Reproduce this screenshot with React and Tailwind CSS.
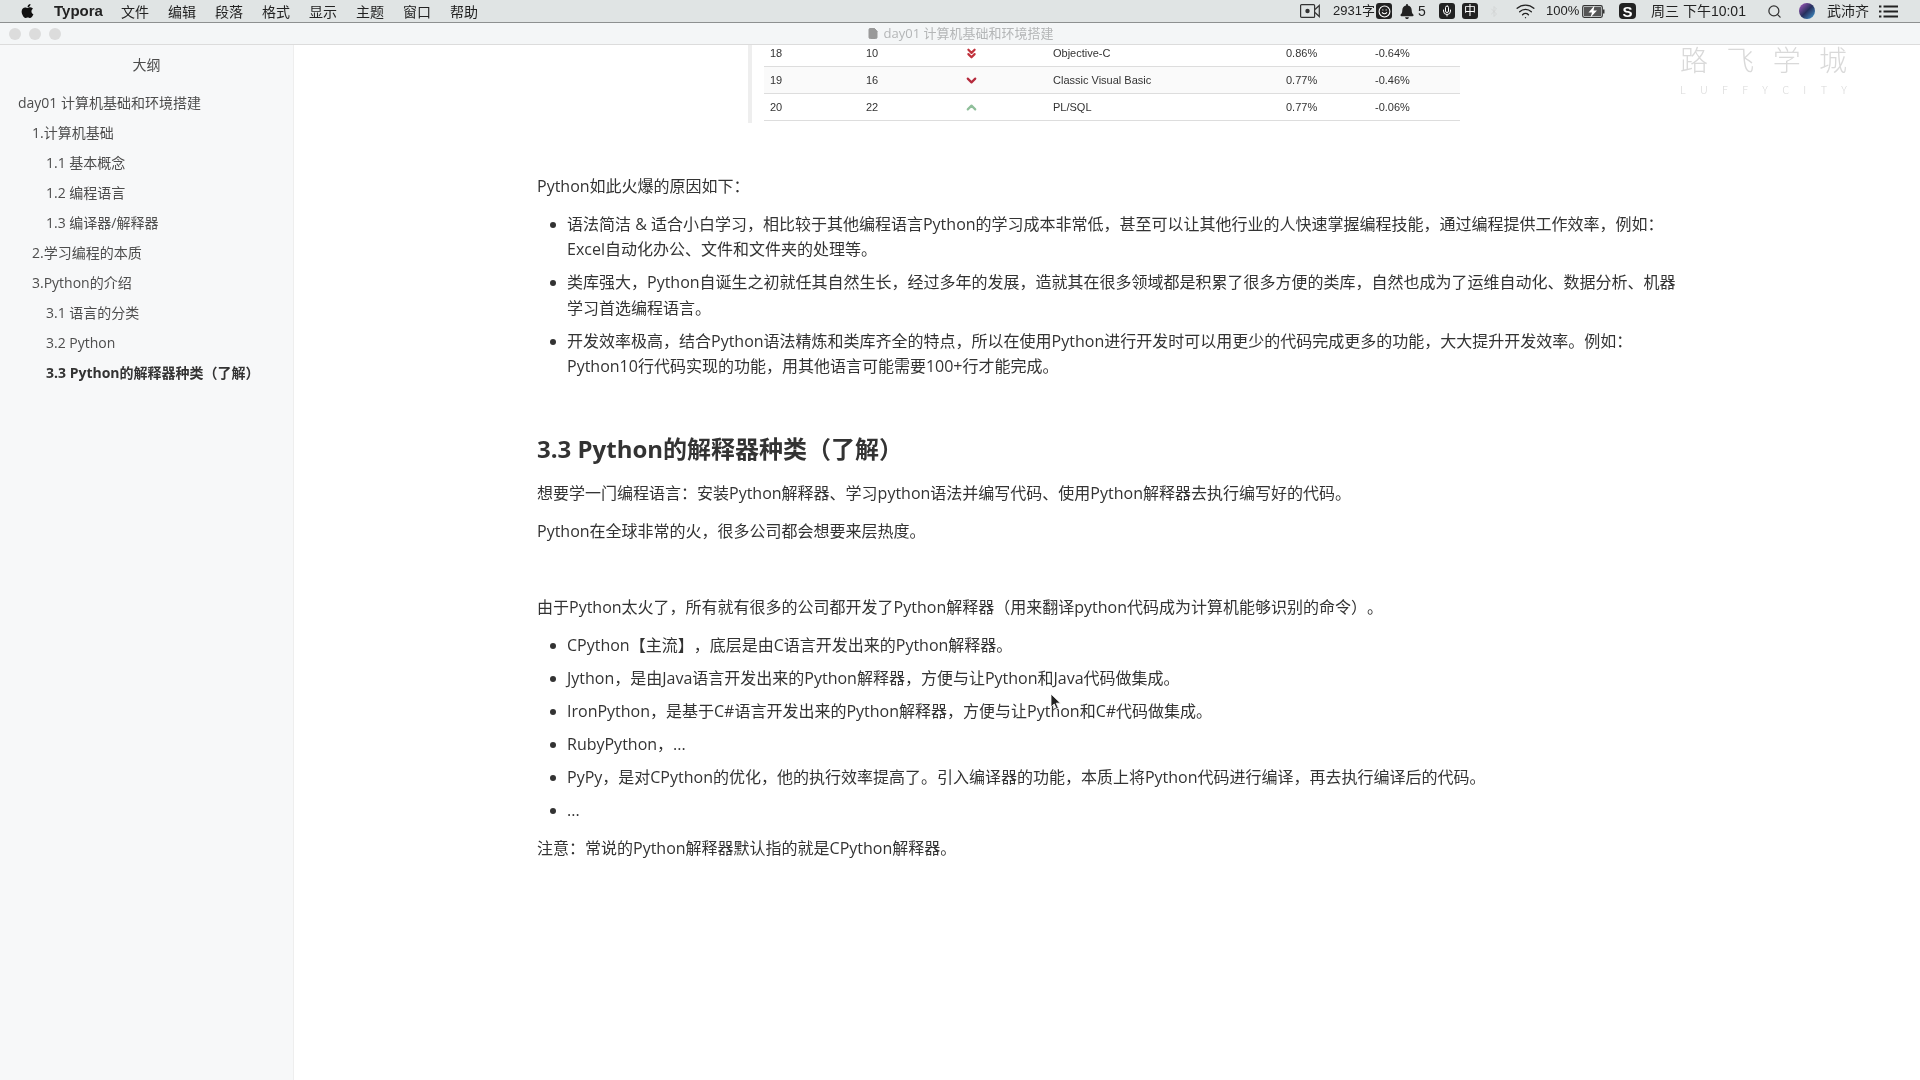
import React from "react";
import { FaApple, FaBell } from "react-icons/fa";
import { Mic, Bluetooth, Wifi, Search, ChevronsDown, ChevronDown, ChevronUp, Smile, File } from "lucide-react";

const FONT = "[font-family:'Open_Sans','Noto_Sans_CJK_SC',sans-serif] [text-spacing-trim:space-all]";

const MENUS = ["文件", "编辑", "段落", "格式", "显示", "主题", "窗口", "帮助"];

const OUTLINE = [
  { label: "day01 计算机基础和环境搭建", level: "pl-[18px]" },
  { label: "1.计算机基础", level: "pl-[32px]" },
  { label: "1.1 基本概念", level: "pl-[46px]" },
  { label: "1.2 编程语言", level: "pl-[46px]" },
  { label: "1.3 编译器/解释器", level: "pl-[46px]" },
  { label: "2.学习编程的本质", level: "pl-[32px]" },
  { label: "3.Python的介绍", level: "pl-[32px]" },
  { label: "3.1 语言的分类", level: "pl-[46px]" },
  { label: "3.2 Python", level: "pl-[46px]" },
  { label: "3.3 Python的解释器种类（了解）", level: "pl-[46px]", active: true },
];

const ROWS = [
  { now: "18", prev: "10", icon: ChevronsDown, color: "w-[15px] h-[15px] text-[#c0323c]", name: "Objective-C", rate: "0.86%", change: "-0.64%" },
  { now: "19", prev: "16", icon: ChevronDown, color: "w-[15px] h-[15px] text-[#b52a3c]", name: "Classic Visual Basic", rate: "0.77%", change: "-0.46%", shade: true },
  { now: "20", prev: "22", icon: ChevronUp, color: "w-[15px] h-[15px] text-[#8fbf9a]", name: "PL/SQL", rate: "0.77%", change: "-0.06%" },
];

const REASONS = [
  ["语法简洁 & 适合小白学习，相比较于其他编程语言Python的学习成本非常低，甚至可以让其他行业的人快速掌握编程技能，通过编程提供工作效率，例如：", "Excel自动化办公、文件和文件夹的处理等。"],
  ["类库强大，Python自诞生之初就任其自然生长，经过多年的发展，造就其在很多领域都是积累了很多方便的类库，自然也成为了运维自动化、数据分析、机器", "学习首选编程语言。"],
  ["开发效率极高，结合Python语法精炼和类库齐全的特点，所以在使用Python进行开发时可以用更少的代码完成更多的功能，大大提升开发效率。例如：", "Python10行代码实现的功能，用其他语言可能需要100+行才能完成。"],
];

const KINDS = [
  "CPython【主流】，底层是由C语言开发出来的Python解释器。",
  "Jython，是由Java语言开发出来的Python解释器，方便与让Python和Java代码做集成。",
  "IronPython，是基于C#语言开发出来的Python解释器，方便与让Python和C#代码做集成。",
  "RubyPython，...",
  "PyPy，是对CPython的优化，他的执行效率提高了。引入编译器的功能，本质上将Python代码进行编译，再去执行编译后的代码。",
  "...",
];

function Bullet({ children }) {
  return (
    <li className="relative pl-[30px] mb-[7.4px] last:mb-0">
      <span className="absolute left-[13px] top-[10px] w-[6px] h-[6px] rounded-full bg-[#333]" />
      {children}
    </li>
  );
}

function CameraIcon() {
  return (
    <svg className="w-[20px] h-[14px]" viewBox="0 0 20 14" fill="none" stroke="#333" strokeWidth="1.2">
      <rect x="0.6" y="0.6" width="14" height="12.800" rx="1" />
      <circle cx="7.500" cy="7" r="2.200" fill="#333" stroke="none" />
      <path d="M15 5.500 19.300 1.500V12.500L15 8.500" />
    </svg>
  );
}

function BatteryIcon() {
  return (
    <svg className="w-[23px] h-[13px]" viewBox="0 0 23 13" fill="none">
      <rect x="0.7" y="0.7" width="19.600" height="11.600" rx="1.500" stroke="#333" strokeWidth="1.2" />
      <rect x="2" y="2" width="17" height="9" fill="#555" />
      <path d="M12.500 0.500 6.500 7.500H10L8.500 12.500 15 5.500H11.500z" fill="#fff" />
      <rect x="21" y="4.500" width="1.500" height="4" fill="#333" />
    </svg>
  );
}

function ListIcon() {
  return (
    <svg className="w-[19px] h-[13px]" viewBox="0 0 19 13" fill="#222">
      <rect x="0" y="0.500" width="2.400" height="2" />
      <rect x="4.500" y="0.500" width="14.500" height="2" />
      <rect x="0" y="5.500" width="2.400" height="2" />
      <rect x="4.500" y="5.500" width="14.500" height="2" />
      <rect x="0" y="10.500" width="2.400" height="2" />
      <rect x="4.500" y="10.500" width="14.500" height="2" />
    </svg>
  );
}

function MenuBar() {
  return (
    <header className={`${FONT} h-[23px] shrink-0 flex items-center bg-[#e0e4e4] border-b border-[#8d9090] text-[14px] text-[#222]`}>
      <FaApple className="ml-[20px] w-[15px] h-[16px] text-[#111]" />
      <span className="ml-[19px] w-[49px] text-[15px] font-bold [font-family:'Liberation_Sans',sans-serif]">Typora</span>
      <div className="ml-[18px] flex gap-[19px]">
        {MENUS.map((m) => <span key={m} className="w-[28px] whitespace-nowrap">{m}</span>)}
      </div>
      <div className="ml-auto flex items-center text-[13px] [font-family:'Liberation_Sans','Noto_Sans_CJK_SC',sans-serif]">
        <CameraIcon />
        <span className="ml-[13px] w-[39px] whitespace-nowrap">2931字</span>
        <span className="ml-[4px] w-[16px] h-[16px] rounded-[3px] bg-[#222] flex items-center justify-center">
          <Smile className="w-[13px] h-[13px] text-white" />
        </span>
        <FaBell className="ml-[8px] w-[14px] h-[15px] text-[#222]" />
        <span className="ml-[4px] w-[8px] text-[14px]">5</span>
        <span className="ml-[13px] w-[16px] h-[16px] rounded-[3px] bg-[#222] flex items-center justify-center">
          <Mic className="w-[12px] h-[12px] text-white" />
        </span>
        <span className="ml-[7px] w-[16px] h-[16px] rounded-[3px] bg-[#222] text-white text-[12px] leading-none flex items-center justify-center">中</span>
        <Bluetooth className="ml-[10px] w-[12px] h-[15px] text-[#cfd2d2]" strokeWidth={1.5} />
        <Wifi className="ml-[14px] w-[23px] h-[20px] text-[#222]" strokeWidth={1.6} />
        <span className="ml-[9px] w-[31px] text-[13px] whitespace-nowrap">100%</span>
        <span className="ml-[5px] flex"><BatteryIcon /></span>
        <span className="ml-[14px] w-[17px] h-[16px] rounded-[4px] bg-[#222] text-white text-[15px] font-bold leading-none flex items-center justify-center">S</span>
        <span className="ml-[15px] w-[96px] text-[14px] whitespace-nowrap">周三 下午10:01</span>
        <Search className="ml-[20px] w-[15px] h-[15px] text-[#333]" />
        <span className="ml-[17px] w-[16px] h-[16px] rounded-full bg-gradient-to-br from-[#b05ac8] via-[#27305e] to-[#3aa0d8]" />
        <span className="ml-[12px] w-[42px] text-[14px] whitespace-nowrap">武沛齐</span>
        <span className="ml-[10px] mr-[22px] flex"><ListIcon /></span>
      </div>
    </header>
  );
}

function TitleBar() {
  return (
    <div className={`${FONT} relative h-[22px] shrink-0 flex items-center justify-center bg-[#f4f6f7] border-b border-[#dcdcdc] text-[13px] text-[#b4b6b7]`}>
      <div className="absolute left-[9px] top-[5px] flex gap-[8px]">
        <span className="w-[12px] h-[12px] rounded-full bg-[#dcdcdc]" />
        <span className="w-[12px] h-[12px] rounded-full bg-[#dcdcdc]" />
        <span className="w-[12px] h-[12px] rounded-full bg-[#dcdcdc]" />
      </div>
      <File className="w-[12px] h-[13px] mr-[5px] text-[#999] fill-[#999]" />
      day01 计算机基础和环境搭建
    </div>
  );
}

function Sidebar() {
  return (
    <aside className={`${FONT} w-[294px] shrink-0 bg-[#f7f8f9] border-r border-[#eeeeee] text-[14px] text-[#4d4d4d]`}>
      <div className="h-[36px] mt-[1px] mb-[5px] flex items-center justify-center">大纲</div>
      <ul>
        {OUTLINE.map((item) => (
          <li key={item.label} className={`h-[30px] flex items-center whitespace-nowrap ${item.level} ${item.active ? "font-bold text-[#333]" : ""}`}>
            {item.label}
          </li>
        ))}
      </ul>
    </aside>
  );
}

function RankTable() {
  return (
    <div className="ml-[454px] w-[716px] h-[78px] border-l-[4px] border-[#eeeeee] pl-[12px] [font-family:'Liberation_Sans',sans-serif] text-[11px] text-[#333]">
      {ROWS.map((row) => (
        <div key={row.now} className={`h-[27px] first:h-[22px] first:pb-[5px] w-[696px] flex items-center border-b border-[#dddddd] ${row.shade ? "bg-[#fafafa]" : ""}`}>
          <span className="w-[102px] pl-[6px]">{row.now}</span>
          <span className="w-[98px]">{row.prev}</span>
          <span className="w-[89px]"><row.icon className={row.color} strokeWidth={3.5} /></span>
          <span className="w-[233px]">{row.name}</span>
          <span className="w-[89px]">{row.rate}</span>
          <span>{row.change}</span>
        </div>
      ))}
    </div>
  );
}

function Article() {
  return (
    <main className="relative flex-1 bg-white">
      <RankTable />
      <article className={`${FONT} pl-[243px] pr-[130px] mt-[51px] text-[16px] leading-[25.6px] text-[#333] whitespace-nowrap`}>
        <p className="mb-[12px]">Python如此火爆的原因如下：</p>
        <ul>
          {REASONS.map((lines) => (
            <Bullet key={lines[0]}>{lines[0]}<br />{lines[1]}</Bullet>
          ))}
        </ul>
        <h2 className="mt-[51px] mb-[14px] text-[24px] leading-[36px] font-bold text-[#333]">3.3 Python的解释器种类（了解）</h2>
        <p className="mb-[12.8px]">想要学一门编程语言：安装Python解释器、学习python语法并编写代码、使用Python解释器去执行编写好的代码。</p>
        <p className="mb-[49.6px]">Python在全球非常的火，很多公司都会想要来层热度。</p>
        <p className="mb-[12.8px]">由于Python太火了，所有就有很多的公司都开发了Python解释器（用来翻译python代码成为计算机能够识别的命令）。</p>
        <ul className="mb-[12.8px]">
          {KINDS.map((k) => <Bullet key={k}>{k}</Bullet>)}
        </ul>
        <p>注意：常说的Python解释器默认指的就是CPython解释器。</p>
      </article>

      {/* watermark */}
      <div className="absolute top-0 left-[1386px] w-[167px] text-[#d9d9d9] [font-family:'Noto_Sans_CJK_SC',sans-serif] font-light">
        <div className="flex justify-between text-[28px] leading-[28px]">
          <span>路</span><span>飞</span><span>学</span><span>城</span>
        </div>
        <div className="flex justify-between text-[11px] leading-[14px] mt-[9px]">
          {"LUFFYCITY".split("").map((c, i) => <span key={i}>{c}</span>)}
        </div>
      </div>

      {/* mouse cursor */}
      <svg className="absolute left-[756px] top-[648px]" width="12" height="18" viewBox="0 0 12 18">
        <path d="M1 1v13l3.2-3 2.2 5 2-.9-2.2-4.9H10.500z" fill="#222" stroke="#fff" strokeWidth="0.8" />
      </svg>
    </main>
  );
}

export default function App() {
  return (
    <div className="w-[1920px] h-[1080px] flex flex-col overflow-hidden bg-white blur-[0.4px]">
      <MenuBar />
      <TitleBar />
      <div className="flex flex-1 min-h-0">
        <Sidebar />
        <Article />
      </div>
    </div>
  );
}
